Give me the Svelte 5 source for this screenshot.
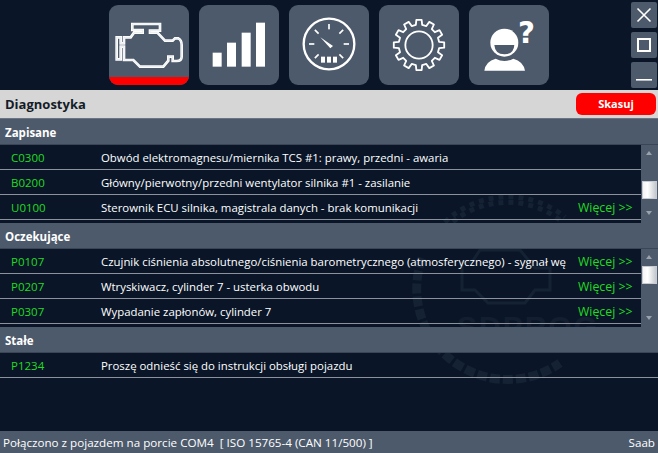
<script>
	const sections = [
		{
			title: 'Zapisane',
			scroll: true,
			rows: [
				{ code: 'C0300', text: 'Obwód elektromagnesu/miernika TCS #1: prawy, przedni - awaria' },
				{ code: 'B0200', text: 'Główny/pierwotny/przedni wentylator silnika #1 - zasilanie' },
				{ code: 'U0100', text: 'Sterownik ECU silnika, magistrala danych - brak komunikacji', more: true }
			]
		},
		{
			title: 'Oczekujące',
			scroll: true,
			rows: [
				{ code: 'P0107', text: 'Czujnik ciśnienia absolutnego/ciśnienia barometrycznego (atmosferycznego) - sygnał wę', more: true },
				{ code: 'P0207', text: 'Wtryskiwacz, cylinder 7 - usterka obwodu', more: true },
				{ code: 'P0307', text: 'Wypadanie zapłonów, cylinder 7', more: true }
			]
		},
		{
			title: 'Stałe',
			scroll: false,
			rows: [{ code: 'P1234', text: 'Proszę odnieść się do instrukcji obsługi pojazdu' }]
		}
	];

	const engine =
		'M72 112 H92 L102 98 H128 V90 H97 V72 H180 V92 H150 V98 H172 L195 122 H218 L225 115 H235 Q245 120 245 135 V170 Q245 183 230 183 H218 V170 H205 V182 L190 200 H120 L100 180 H72 V140 H62 V178 H50 V112 H62 V130 H72 Z';

	// gear outline, 12 teeth
	function gearPath(cx, cy, inner, outer, teeth) {
		let d = '';
		const step = (Math.PI * 2) / teeth;
		for (let i = 0; i < teeth; i++) {
			const a = i * step - Math.PI / 2;
			const pts = [
				[inner, a - step * 0.3],
				[outer, a - step * 0.2],
				[outer, a + step * 0.2],
				[inner, a + step * 0.3]
			];
			for (const [r, t] of pts) {
				d += (d ? 'L' : 'M') + (cx + r * Math.cos(t)).toFixed(1) + ' ' + (cy + r * Math.sin(t)).toFixed(1) + ' ';
			}
		}
		return d + 'Z';
	}

	const ticks = [-135, -90, -45, 0, 45, 90, 135];
</script>

<div class="page">
	<svg class="watermark" viewBox="0 0 658 453" width="658" height="453" aria-hidden="true">
		<g fill="none" stroke="#152234">
			<!-- checkered top of the ring -->
			<path d="M427 246 A91 91 0 0 1 565 217" stroke-width="5" stroke-dasharray="5 5" />
			<path d="M431 249 A86 86 0 0 1 561 221" stroke-width="5" stroke-dasharray="5 5" stroke-dashoffset="5" />
			<!-- solid blocks round the left and bottom -->
			<path d="M422 258 A91 91 0 0 0 560 363" stroke-width="9" stroke-dasharray="10 3" />
			<path d="M462 262 H472 L480 250 H520 L535 268 H550 V290 H535 L525 303 H488 L475 290 H462 Z" stroke-width="3" />
		</g>
		<text x="457" y="337" class="wm-text">SDPROG</text>
	</svg>

	<header class="top">
		<nav class="tabs">
			<button class="tab active" aria-label="Diagnostyka">
				<svg viewBox="27 15 240 240" width="80" height="80" fill="none">
					<path d={engine} stroke="#fff" stroke-width="8" />
					<path d={engine} stroke="#d4d8dd" stroke-width="1.5" />
				</svg>
			</button>
			<button class="tab" aria-label="Dane">
				<svg viewBox="327 15 240 240" width="80" height="80" fill="#fff">
					<rect x="368" y="158" width="27" height="42" />
					<rect x="411" y="128" width="27" height="72" />
					<rect x="455" y="98" width="27" height="102" />
					<rect x="498" y="68" width="27" height="132" />
				</svg>
			</button>
			<button class="tab" aria-label="Wskaźniki">
				<svg viewBox="12 15 240 240" width="80" height="80">
					<circle cx="132" cy="132" r="76" fill="none" stroke="#fff" stroke-width="7" />
					{#each ticks as t}
						<rect x="129.5" y="72" width="5" height="16" fill="#fff" transform="rotate({t} 132 132)" />
					{/each}
					<path d="M106 112 L144 138 L136 145 Z" fill="#fff" />
					<rect x="108" y="170" width="12" height="18" fill="#fff" />
					<rect x="126" y="170" width="12" height="18" fill="#fff" />
					<rect x="144" y="170" width="12" height="18" fill="#fff" />
				</svg>
			</button>
			<button class="tab" aria-label="Ustawienia">
				<svg viewBox="27 15 240 240" width="80" height="80" fill="none" stroke="#fff">
					<path d={gearPath(147, 135, 61, 76, 12)} stroke-width="5.5" stroke-linejoin="round" />
					<circle cx="147" cy="135" r="41" stroke-width="5.5" />
				</svg>
			</button>
			<button class="tab" aria-label="Pomoc">
				<svg viewBox="12 15 240 240" width="80" height="80" fill="#fff">
					<circle cx="118" cy="128" r="42" />
					<path d="M88 135 H148 Q146 163 118 163 Q90 163 88 135 Z" fill="#4d5a6b" />
					<path d="M58 212 Q62 184 92 176 Q118 190 145 176 Q175 184 180 212 Z" />
					<text x="159" y="130" class="qm">?</text>
				</svg>
			</button>
		</nav>

		<div class="win">
			<button aria-label="Zamknij">
				<svg viewBox="0 0 26 26" width="26" height="26" stroke="#fff" stroke-width="1.6">
					<path d="M6.5 6.5 L19.5 19.5 M19.5 6.5 L6.5 19.5" />
				</svg>
			</button>
			<button aria-label="Maksymalizuj">
				<svg viewBox="0 0 26 26" width="26" height="26" fill="none" stroke="#fff" stroke-width="2">
					<rect x="7" y="7" width="12" height="12" />
				</svg>
			</button>
			<button aria-label="Minimalizuj">
				<svg viewBox="0 0 26 26" width="26" height="26" fill="#fff">
					<rect x="5" y="17" width="16" height="1.6" />
				</svg>
			</button>
		</div>
	</header>

	<div class="titlebar">
		<h1>Diagnostyka</h1>
		<button class="clear">Skasuj</button>
	</div>

	{#each sections as s}
		<section>
			<h2>{s.title}</h2>
			<div class="body">
				<ul>
					{#each s.rows as r}
						<li>
							<span class="code">{r.code}</span>
							<span class="desc">{r.text}</span>
							{#if r.more}<span class="more">Więcej &gt;&gt;</span>{/if}
						</li>
					{/each}
				</ul>
				{#if s.scroll}
					<div class="scroll">
						<i class="up"></i>
						<i class="thumb"></i>
						<i class="down"></i>
					</div>
				{/if}
			</div>
		</section>
	{/each}

	<footer>
		<span>Połączono z pojazdem na porcie COM4&nbsp; [ ISO 15765-4 (CAN 11/500) ]</span>
		<span>Saab</span>
	</footer>
</div>

<style>
	:global(body) {
		margin: 0;
		background: #0a1628;
	}

	.page {
		position: relative;
		width: 658px;
		height: 453px;
		overflow: hidden;
		background: #0a1628;
		font-family: 'Open Sans', 'Liberation Sans', sans-serif;
		font-size: 11px;
		color: #fff;
		display: flex;
		flex-direction: column;
	}

	.watermark {
		position: absolute;
		left: 0;
		top: 0;
	}

	.wm-text {
		font-family: 'Liberation Sans', sans-serif;
		font-size: 30px;
		font-weight: 700;
		letter-spacing: 2px;
		fill: #131f31;
	}

	button {
		border: 0;
		padding: 0;
		cursor: pointer;
		font-family: inherit;
	}

	.top {
		height: 90px;
		flex: none;
		display: flex;
		position: relative;
		padding-right: 1px;
		box-sizing: border-box;
	}

	.tabs {
		display: flex;
		gap: 10px;
		padding: 5px 0 0 109px;
	}

	.tab {
		position: relative;
		width: 80px;
		height: 80px;
		background: #4d5a6b;
		border-radius: 9px;
		overflow: hidden;
	}

	.tab svg {
		display: block;
	}

	.tab.active::after {
		content: '';
		position: absolute;
		left: 0;
		right: 0;
		bottom: 0;
		height: 8px;
		background: #f00;
	}

	.qm {
		font-family: 'DejaVu Sans', sans-serif;
		font-weight: 700;
		font-size: 88px;
	}

	.win {
		margin-left: auto;
		padding-top: 2px;
		display: flex;
		flex-direction: column;
		gap: 4px;
	}

	.win button {
		width: 26px;
		height: 26px;
		background: #4d5a6b;
		border-radius: 2px;
	}

	.win svg {
		display: block;
	}

	.titlebar {
		position: relative;
		height: 29px;
		flex: none;
		box-sizing: border-box;
		background: #d6d6d6;
		border-bottom: 1px solid #6a7482;
		display: flex;
		align-items: center;
		justify-content: space-between;
		padding: 0 2px 1px 5px;
	}

	h1 {
		margin: 0;
		font-size: 13px;
		font-weight: 700;
		color: #141c28;
	}

	.clear {
		width: 80px;
		height: 22px;
		border-radius: 6px;
		background: #f00;
		color: #fff;
		font-size: 11px;
		font-weight: 700;
	}

	section {
		position: relative;
		flex: none;
	}

	h2 {
		margin: 0;
		height: 26px;
		line-height: 27px;
		padding-left: 5px;
		background: #4d5a6b;
		font-size: 11.5px;
		font-weight: 700;
		color: #fff;
		border-bottom: 1px solid #3a4656;
		box-sizing: border-box;
	}

	.body {
		display: flex;
		height: 78px;
	}

	ul {
		list-style: none;
		margin: 0;
		padding: 0;
		flex: 1;
		min-width: 0;
	}

	li {
		height: 25px;
		box-sizing: border-box;
		border-bottom: 1px solid #8b929c;
		display: grid;
		grid-template-columns: 101px 477px 1fr;
		align-items: center;
		white-space: nowrap;
	}

	.code {
		padding-left: 11px;
		color: #20dc20;
		font-size: 11.5px;
	}

	.desc {
		font-size: 11.4px;
	}

	.more {
		color: #20dc20;
		font-size: 12.3px;
	}

	.scroll {
		width: 17px;
		flex: none;
		background: #4d5a6b;
		position: relative;
	}

	.scroll i {
		position: absolute;
		display: block;
	}

	.up,
	.down {
		left: 5px;
		width: 0;
		height: 0;
		border-left: 3.5px solid transparent;
		border-right: 3.5px solid transparent;
	}

	.up {
		top: 6px;
		border-bottom: 4px solid #9aa2ac;
	}

	.down {
		top: 66px;
		border-top: 4px solid #9aa2ac;
	}

	.thumb {
		left: 1px;
		top: 36px;
		width: 15px;
		height: 18px;
		box-sizing: border-box;
		border: 1px solid #c8ccd2;
		background: linear-gradient(90deg, #f4f4f4, #fff 35%, #c4c8cd);
	}

	section:nth-of-type(2) .thumb {
		top: 17px;
	}

	section:nth-of-type(2) .down {
		top: 67px;
	}

	footer {
		margin-top: auto;
		height: 22px;
		flex: none;
		box-sizing: border-box;
		background: #4d5a6b;
		display: flex;
		align-items: center;
		justify-content: space-between;
		padding: 0 3px;
		font-size: 11.65px;
		position: relative;
	}
</style>
